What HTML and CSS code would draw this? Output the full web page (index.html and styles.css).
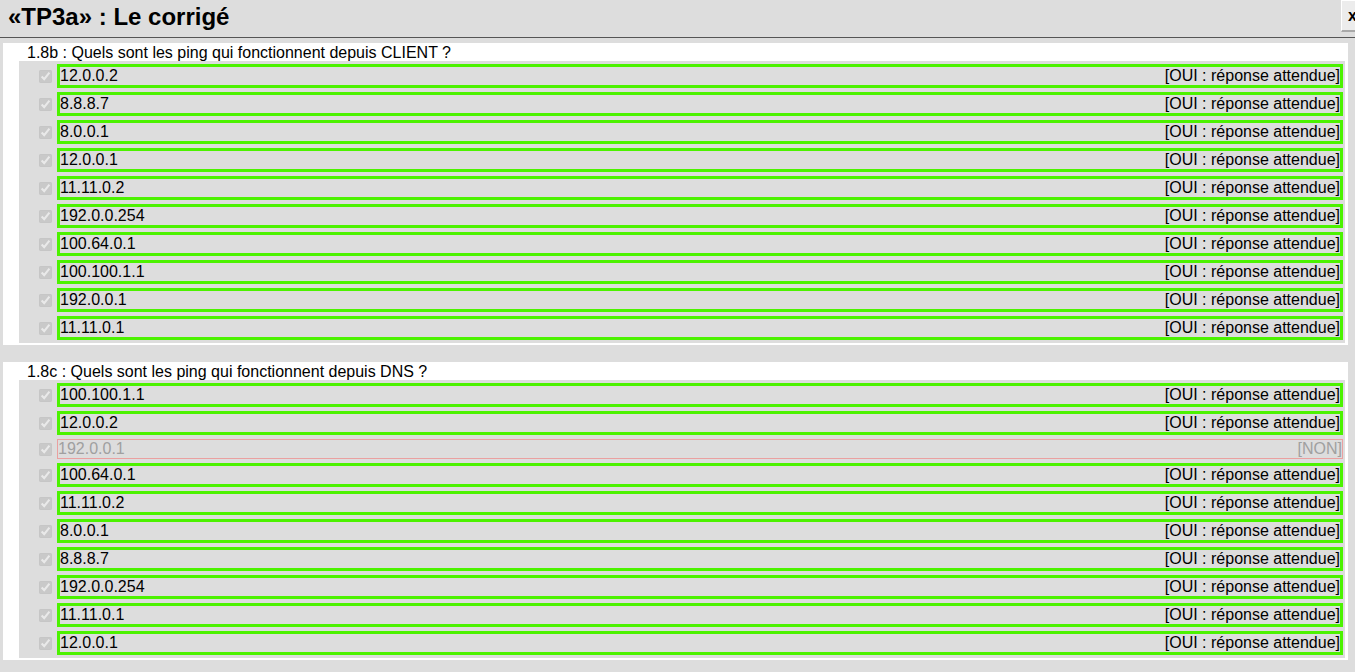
FILE: index.html
```html
<!DOCTYPE html>
<html lang="fr">
<head>
<meta charset="utf-8">
<title>«TP3a» : Le corrigé</title>
<link rel="stylesheet" href="styles.css">
</head>
<body>
<header class="topbar">
  <h1 class="title">«TP3a» : Le corrigé</h1>
  <button class="close" type="button">x</button>
</header>
<main class="content">
  <section class="question">
    <div class="qtitle">1.8b : Quels sont les ping qui fonctionnent depuis CLIENT ?</div>
    <ul class="answers">
      <li class="answer"><input type="checkbox" checked disabled><div class="box ok"><span>12.0.0.2</span><span>[OUI : réponse attendue]</span></div></li>
      <li class="answer"><input type="checkbox" checked disabled><div class="box ok"><span>8.8.8.7</span><span>[OUI : réponse attendue]</span></div></li>
      <li class="answer"><input type="checkbox" checked disabled><div class="box ok"><span>8.0.0.1</span><span>[OUI : réponse attendue]</span></div></li>
      <li class="answer"><input type="checkbox" checked disabled><div class="box ok"><span>12.0.0.1</span><span>[OUI : réponse attendue]</span></div></li>
      <li class="answer"><input type="checkbox" checked disabled><div class="box ok"><span>11.11.0.2</span><span>[OUI : réponse attendue]</span></div></li>
      <li class="answer"><input type="checkbox" checked disabled><div class="box ok"><span>192.0.0.254</span><span>[OUI : réponse attendue]</span></div></li>
      <li class="answer"><input type="checkbox" checked disabled><div class="box ok"><span>100.64.0.1</span><span>[OUI : réponse attendue]</span></div></li>
      <li class="answer"><input type="checkbox" checked disabled><div class="box ok"><span>100.100.1.1</span><span>[OUI : réponse attendue]</span></div></li>
      <li class="answer"><input type="checkbox" checked disabled><div class="box ok"><span>192.0.0.1</span><span>[OUI : réponse attendue]</span></div></li>
      <li class="answer"><input type="checkbox" checked disabled><div class="box ok"><span>11.11.0.1</span><span>[OUI : réponse attendue]</span></div></li>
    </ul>
  </section>
  <section class="question">
    <div class="qtitle">1.8c : Quels sont les ping qui fonctionnent depuis DNS ?</div>
    <ul class="answers">
      <li class="answer"><input type="checkbox" checked disabled><div class="box ok"><span>100.100.1.1</span><span>[OUI : réponse attendue]</span></div></li>
      <li class="answer"><input type="checkbox" checked disabled><div class="box ok"><span>12.0.0.2</span><span>[OUI : réponse attendue]</span></div></li>
      <li class="answer"><input type="checkbox" checked disabled><div class="box bad"><span>192.0.0.1</span><span>[NON]</span></div></li>
      <li class="answer"><input type="checkbox" checked disabled><div class="box ok"><span>100.64.0.1</span><span>[OUI : réponse attendue]</span></div></li>
      <li class="answer"><input type="checkbox" checked disabled><div class="box ok"><span>11.11.0.2</span><span>[OUI : réponse attendue]</span></div></li>
      <li class="answer"><input type="checkbox" checked disabled><div class="box ok"><span>8.0.0.1</span><span>[OUI : réponse attendue]</span></div></li>
      <li class="answer"><input type="checkbox" checked disabled><div class="box ok"><span>8.8.8.7</span><span>[OUI : réponse attendue]</span></div></li>
      <li class="answer"><input type="checkbox" checked disabled><div class="box ok"><span>192.0.0.254</span><span>[OUI : réponse attendue]</span></div></li>
      <li class="answer"><input type="checkbox" checked disabled><div class="box ok"><span>11.11.0.1</span><span>[OUI : réponse attendue]</span></div></li>
      <li class="answer"><input type="checkbox" checked disabled><div class="box ok"><span>12.0.0.1</span><span>[OUI : réponse attendue]</span></div></li>
    </ul>
  </section>
</main>
</body>
</html>
```
FILE: styles.css
```css
html, body {
  margin: 0;
  padding: 0;
  background: #dddddd;
  font-family: "Liberation Sans", Arial, sans-serif;
  font-size: 16px;
  color: #000;
}

.topbar {
  display: flex;
  justify-content: space-between;
  align-items: flex-start;
  height: 37px;
  border-bottom: 1px solid #555555;
  overflow: hidden;
}

.title {
  margin: 0;
  padding: 3px 0 0 8px;
  font-size: 24px;
  line-height: 28px;
  font-weight: bold;
}

.close {
  width: 24px;
  height: 32px;
  margin: 0 -10px 0 0;
  padding: 0 0 0 6px;
  text-align: left;
  background: #ececec;
  border: none;
  border-left: 1px solid #ffffff;
  border-top: 1px solid #ffffff;
  border-bottom: 2px solid #a8a8a8;
  font-family: "Liberation Sans", Arial, sans-serif;
  font-size: 16px;
  font-weight: bold;
  color: #000;
}

.content {
  display: flex;
  flex-direction: column;
  gap: 17px;
  padding: 5px 7px 0 3px;
}

.question {
  background: #ffffff;
  padding: 0 3px 2px 16px;
}

.qtitle {
  padding: 2px 0 0 8px;
  height: 16px;
  line-height: 16px;
}

.answers {
  list-style: none;
  margin: 0;
  padding: 3px 2px 3px 0;
  background: #dddddd;
  display: flex;
  flex-direction: column;
  gap: 4px;
}

.answer {
  display: flex;
  align-items: center;
}

.answer input {
  width: 13px;
  height: 13px;
  margin: 0 5px 0 20px;
  flex: none;
}

.box {
  flex: 1;
  display: flex;
  justify-content: space-between;
  box-sizing: border-box;
  line-height: 18px;
}

.box.ok {
  height: 24px;
  border: 3px solid #4cf200;
}

.box.bad {
  height: 20px;
  border: 1px solid #eaa0a0;
  color: #a0a0a0;
}
```
